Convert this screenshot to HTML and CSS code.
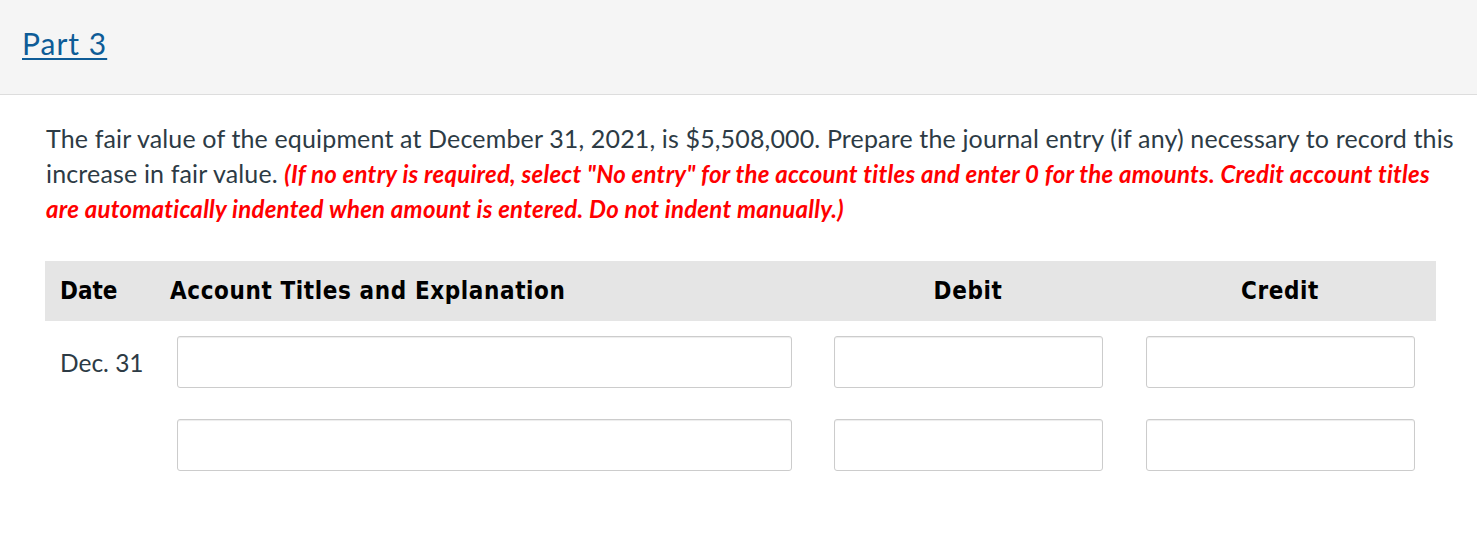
FILE: index.html
```html
<!DOCTYPE html>
<html lang="en">
<head>
<meta charset="utf-8">
<title>Part 3</title>
<link rel="stylesheet" href="styles.css">
</head>
<body>
<div class="part-bar">
  <a class="part-link" href="#">Part 3</a>
</div>
<div class="content">
  <p class="question">The fair value of the equipment at December 31, 2021, is $5,508,000. Prepare the journal entry (if any) necessary to record this increase in fair value. <em class="note">(If no entry is required, select "No entry" for the account titles and enter 0 for the amounts. Credit account titles are automatically indented when amount is entered. Do not indent manually.)</em></p>
  <div class="journal">
    <div class="jrow jhead">
      <div class="c-date">Date</div>
      <div class="c-acct"><span class="head-acct">Account Titles and Explanation</span></div>
      <div class="c-amt"><span class="head-amt">Debit</span></div>
      <div class="c-amt"><span class="head-amt">Credit</span></div>
    </div>
    <div class="jrow jbody first">
      <div class="c-date date-txt">Dec. 31</div>
      <div class="c-acct"><input class="fld fld-acct" type="text"></div>
      <div class="c-amt"><input class="fld fld-amt" type="text"></div>
      <div class="c-amt"><input class="fld fld-amt" type="text"></div>
    </div>
    <div class="jrow jbody">
      <div class="c-date"></div>
      <div class="c-acct"><input class="fld fld-acct" type="text"></div>
      <div class="c-amt"><input class="fld fld-amt" type="text"></div>
      <div class="c-amt"><input class="fld fld-amt" type="text"></div>
    </div>
  </div>
</div>
</body>
</html>
```

FILE: styles.css
```css
html, body {
  margin: 0;
  padding: 0;
  background: #ffffff;
  font-family: "Lato", "Noto Sans", sans-serif;
  color: #2d3b45;
}

.part-bar {
  box-sizing: border-box;
  height: 95px;
  background: #f5f5f5;
  border-bottom: 1px solid #dddddd;
  padding: 25px 0 0 22px;
}

.part-link {
  display: inline-block;
  font-size: 30px;
  line-height: 36px;
  letter-spacing: 1px;
  color: #0e5c97;
  text-decoration: underline;
  text-decoration-thickness: 2px;
  text-underline-offset: 3px;
}

.content {
  padding: 26px 15px 0 45px;
}

.question {
  margin: 0 0 0 1px;
  font-size: 25px;
  line-height: 35px;
  letter-spacing: 0.15px;
  color: #2d3b45;
}

.note {
  color: #ff0000;
  font-size: 24px;
  line-height: 35px;
  font-weight: 700;
  font-style: italic;
  letter-spacing: 0.25px;
  font-variant-ligatures: none;
}

.journal {
  margin-top: 35px;
  width: 1391px;
}

.jrow {
  display: grid;
  grid-template-columns: 125px 664px 312px 290px;
  align-items: center;
}

.jhead {
  height: 60px;
  background: #e5e5e5;
  font-family: "DejaVu Sans Condensed", "DejaVu Sans", sans-serif;
  font-weight: 700;
  font-size: 24px;
  letter-spacing: 0.6px;
  color: #000000;
}

.jhead .c-date {
  padding-left: 15px;
  letter-spacing: 0;
}

.head-amt {
  display: block;
  width: 268px;
  text-align: center;
}

.jbody {
  height: 52px;
  margin-top: 31px;
}

.jbody.first {
  margin-top: 15px;
}

.date-txt {
  padding-left: 15px;
  font-size: 24.5px;
  color: #2d3b45;
}

.fld {
  display: block;
  box-sizing: border-box;
  height: 52px;
  margin: 0;
  padding: 0 8px;
  border: 1px solid #cccccc;
  border-radius: 3px;
  background: #ffffff;
  box-shadow: inset 0 1px 1px rgba(0, 0, 0, 0.075);
  font-family: "Lato", sans-serif;
  font-size: 20px;
}

.fld-acct {
  width: 615px;
  margin-left: 7px;
}

.fld-amt {
  width: 269px;
}
```
